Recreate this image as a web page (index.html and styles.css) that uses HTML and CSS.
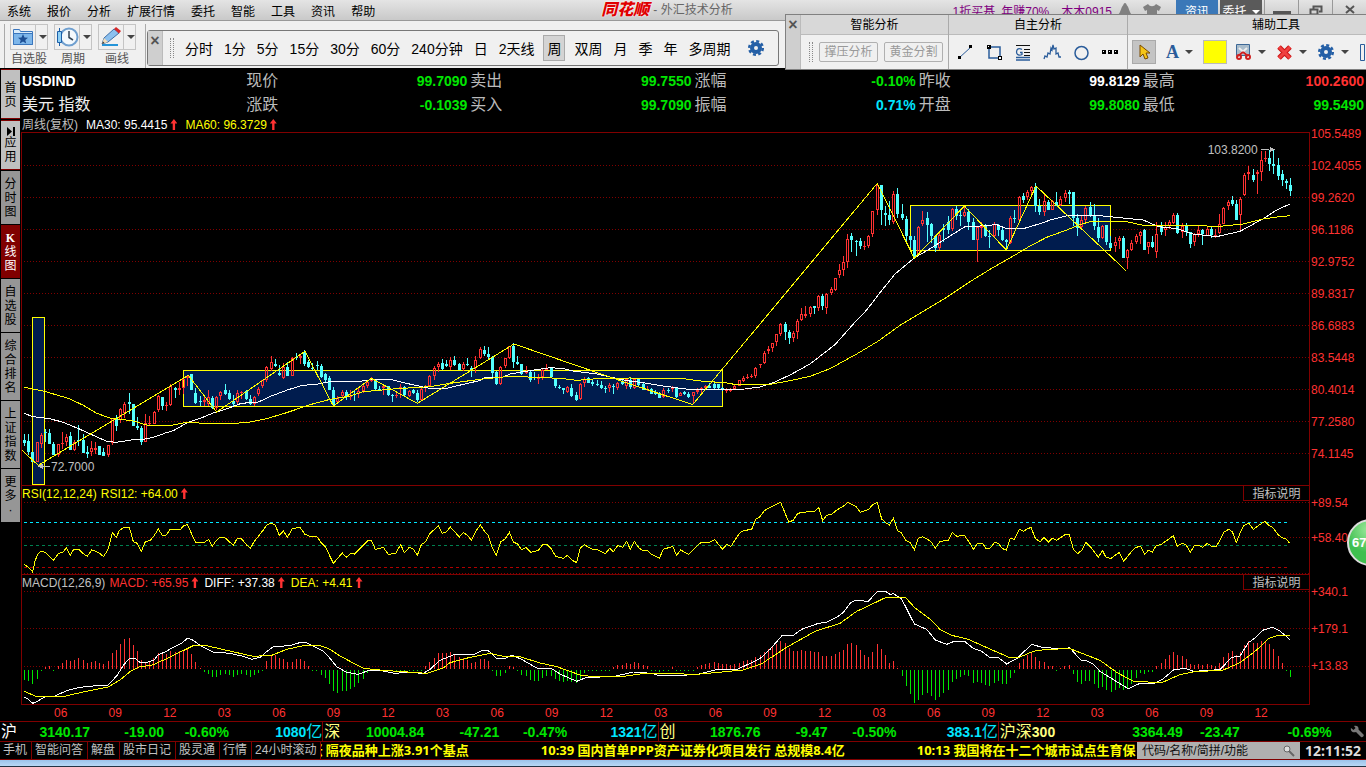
FILE: index.html
```html
<!DOCTYPE html>
<html lang="zh-CN">
<head>
    <meta charset="UTF-8">
    <meta name="viewport" content="width=device-width, initial-scale=1.0">
    <title>同花顺 - 外汇技术分析</title>
    <link rel="stylesheet" href="styles.css">
</head>
<body>
    <header class="titlebar">
        <nav class="menu">
            <button type="button">系统</button>
            <button type="button">报价</button>
            <button type="button">分析</button>
            <button type="button">扩展行情</button>
            <button type="button">委托</button>
            <button type="button">智能</button>
            <button type="button">工具</button>
            <button type="button">资讯</button>
            <button type="button">帮助</button>
        </nav>
        <h1 class="app-title"><span class="logo">同花顺</span> - 外汇技术分析</h1>
        <div class="title-right">
            <a class="promo" href="#">1折买基</a>
            <a class="promo" href="#">年赚70%</a>
            <a class="promo user" href="#">木木0915</a>
            <svg class="bell" width="16" height="16" viewBox="0 0 16 16"><path d="M8 1c1 0 1.500 1 1.700 2C12 5 12 10 15 13H1C4 10 4 5 6.300 3 6.500 2 7 1 8 1z" fill="#808080"/></svg>
            <svg class="shirt" width="20" height="16" viewBox="0 0 20 16"><path d="M6 2c2 3 6 3 8 0l5 3-2 4-2-1v8H5V8L3 9 1 5z" fill="#808080"/></svg>
            <button type="button" class="title-btn news">资讯</button>
            <button type="button" class="title-btn trade">委托<span class="caret light"></span></button>
            <button type="button" class="win-btn" aria-label="最小化"><svg width="18" height="14"><path d="M0 9.500h18" stroke="#555" stroke-width="3"/></svg></button>
            <button type="button" class="win-btn" aria-label="还原"><svg width="14" height="14"><path d="M4.500 6V3.500h8v5H10M1.500 6.500h7v5h-7z" fill="none" stroke="#555" stroke-width="2"/></svg></button>
            <button type="button" class="win-btn" aria-label="关闭"><svg width="12" height="14"><path d="M2 3l8 7M10 3l-8 7" stroke="#555" stroke-width="2"/></svg></button>
        </div>
    </header>

    <div class="toolbar">
        <div class="tool-groups">
            <div class="tool">
                <button type="button" class="split" aria-label="自选股">
                    <svg width="24" height="22" viewBox="0 0 24 22"><path d="M2.500 18.500v-15h6l1 2h12v13z" fill="#d9ecfb" stroke="#3a76bd"/><path d="M2.500 7.500h19v11h-19z" fill="#7db6ea" stroke="#3a76bd"/><path d="M12 8l1.500 3.500 3.500.2-2.700 2.300.9 3.500-3.200-2-3.200 2 .9-3.500L7 11.700l3.500-.2z" fill="#1d4f94"/></svg>
                    <span class="caret"></span>
                </button>
                <span>自选股</span>
            </div>
            <div class="tool">
                <button type="button" class="split" aria-label="周期">
                    <svg width="24" height="22" viewBox="0 0 24 22"><circle cx="14" cy="11" r="8.500" fill="#f4f9fd" stroke="#6f9fcf" stroke-width="2"/><path d="M14 5v6.500l4 2.500" fill="none" stroke="#345" stroke-width="1.500"/><path d="M4.500 2v18" stroke="#1d5fa8"/><path d="M2.500 5.500h4v11h-4z" fill="#8fd0f5" stroke="#1d5fa8"/></svg>
                    <span class="caret"></span>
                </button>
                <span>周期</span>
            </div>
            <div class="tool">
                <button type="button" class="split" aria-label="画线">
                    <svg width="24" height="22" viewBox="0 0 24 22"><path d="M3 19h16" stroke="#2494d8" stroke-width="2"/><path d="M3 18l2-6L15 3l5 4L9 16z" fill="#8cc0ee" stroke="#3f6fa6"/><path d="M15 3l2-2 5 4-2 2.500z" fill="#d62828"/><path d="M3 18l2-6 4 4z" fill="#f3dcb8"/><path d="M3 18l1-2.500L5.500 17z" fill="#333"/></svg>
                    <span class="caret"></span>
                </button>
                <span>画线</span>
            </div>
        </div>
        <div class="periods">
            <button type="button" class="close-strip" aria-label="关闭">×</button>
            <span class="grip"></span>
            <button type="button">分时</button>
            <button type="button">1分</button>
            <button type="button">5分</button>
            <button type="button">15分</button>
            <button type="button">30分</button>
            <button type="button">60分</button>
            <button type="button">240分钟</button>
            <button type="button">日</button>
            <button type="button">2天线</button>
            <button type="button" class="selected">周</button>
            <button type="button">双周</button>
            <button type="button">月</button>
            <button type="button">季</button>
            <button type="button">年</button>
            <button type="button">多周期</button>
            <button type="button" class="gear" aria-label="设置"><svg width="18" height="18" viewBox="0 0 18 18"><circle cx="9" cy="9" r="6.800" fill="none" stroke="#245fa6" stroke-width="2.500" stroke-dasharray="3 2.340"/><circle cx="9" cy="9" r="4" fill="none" stroke="#245fa6" stroke-width="4"/></svg></button>
        </div>
    </div>

    <section class="draw-panel">
        <button type="button" class="close-strip" aria-label="关闭">×</button>
        <div class="draw-group smart">
            <h2>智能分析</h2>
            <div class="draw-row">
                <span class="grip"></span>
                <button type="button" class="outline-btn">撑压分析</button>
                <button type="button" class="outline-btn">黄金分割</button>
            </div>
        </div>
        <div class="draw-group manual">
            <h2>自主分析</h2>
            <div class="draw-row">
                <button type="button" aria-label="线段"><svg width="17" height="17"><path d="M2 14L14 3" stroke="#2a5c9a"/><path d="M1 12h3v3H1zM12 1h3v3h-3z"/></svg></button>
                <button type="button" aria-label="矩形"><svg width="17" height="17"><path d="M3 3h11v11H3z" fill="none" stroke="#2a5c9a" stroke-width="1.500"/><path d="M1 1h4v4H1zM12 12h4v4h-4z"/><path d="M2 2h1v1H2zM13 13h2v2h-2z" fill="#fff"/></svg></button>
                <button type="button" aria-label="黄金线"><svg width="17" height="17"><path d="M1 1.500h14M9 5.500h6M9 8.500h6M9 11.500h6" stroke="#111"/><path d="M1 13.500h14M1 16h14M7 5.500C4 3.500 1.500 5 1.500 8s3 4 5.500 2.500v-2H5" fill="none" stroke="#2a5c9a" stroke-width="1.300"/></svg></button>
                <button type="button" aria-label="波浪线"><svg width="18" height="17"><path d="M1 15l1-3 2 1 1-4 2 1 1-6 1 2 1-5 1 4 2-1 0 6 2-1 1 4 2 0" fill="none" stroke="#2a5c9a" stroke-width="1.300"/></svg></button>
                <button type="button" aria-label="圆"><svg width="17" height="17"><circle cx="8.500" cy="9" r="6.500" fill="none" stroke="#2a5c9a" stroke-width="1.500"/></svg></button>
                <button type="button" aria-label="更多"><svg width="17" height="17"><path d="M0 6h4v4H0zM6 6h4v4H6zM12 6h4v4h-4z"/><path d="M1 7h1v1H1zM7 7h1v1H7zM13 7h1v1h-1z" fill="#fff"/></svg></button>
            </div>
        </div>
        <div class="draw-group aids">
            <h2>辅助工具</h2>
            <div class="draw-row">
                <button type="button" class="pressed" aria-label="选择"><svg width="14" height="18"><path d="M3 2v12l3-3 2 5 3-1-2-5h4z" fill="#f5c518" stroke="#7a4b00"/></svg></button>
                <button type="button" class="letter">A<span class="caret"></span></button>
                <button type="button" class="swatch" aria-label="颜色"></button>
                <button type="button" aria-label="剪裁"><svg width="17" height="18"><path d="M1.500 1.500h13v11h-13z" fill="#a9bccb" stroke="#3d6896"/><path d="M4 5l9 8M12 5l-9 8" stroke="#eee" stroke-width="2"/><path d="M8 9l5 4M8 9l-5 4" stroke="#cf2020" stroke-width="2"/><circle cx="4" cy="14" r="2" fill="none" stroke="#cf2020" stroke-width="2"/><circle cx="13" cy="14" r="2" fill="none" stroke="#cf2020" stroke-width="2"/></svg><span class="caret"></span></button>
                <button type="button" aria-label="删除"><svg width="17" height="17"><path d="M3 3l11 11M14 3L3 14" stroke="#cc1414" stroke-width="5"/><path d="M3 3l11 11M14 3L3 14" stroke="#f04040" stroke-width="3"/></svg><span class="caret"></span></button>
                <button type="button" aria-label="设置"><svg width="18" height="18" viewBox="0 0 18 18"><circle cx="9" cy="9" r="6.800" fill="none" stroke="#245fa6" stroke-width="2.500" stroke-dasharray="3 2.340"/><circle cx="9" cy="9" r="4" fill="none" stroke="#245fa6" stroke-width="4"/></svg><span class="caret"></span></button>
                <button type="button" aria-label="区间"><svg width="17" height="19"><path d="M1.500 1.500h4v16h-4z" fill="none" stroke="#2a5c9a"/><path d="M7 13.500h10M7 17.500h10" stroke="#2a5c9a" stroke-dasharray="2 1"/><path d="M8 1h5l-2 2 5 5-1 1-5-5-2 2z"/></svg></button>
            </div>
        </div>
    </section>

    <main class="workspace">
        <nav class="side-tabs">
            <button type="button" class="light">首页</button>
            <button type="button" class="light"><svg width="9" height="9"><path d="M1 0l5 4.500L1 9zM7 0h2v9H7z"/></svg>应用</button>
            <button type="button">分时图</button>
            <button type="button" class="active"><b>K</b>线图</button>
            <button type="button">自选股</button>
            <button type="button">综合排名</button>
            <button type="button">上证指数</button>
            <button type="button">更多<span>·</span></button>
        </nav>

        <div class="content">
            <dl class="quote">
                <div class="name"><dt>USDIND</dt></div>
                <div><dt>现价</dt><dd class="down">99.7090</dd></div>
                <div><dt>卖出</dt><dd class="down">99.7550</dd></div>
                <div><dt>涨幅</dt><dd class="down">-0.10%</dd></div>
                <div><dt>昨收</dt><dd>99.8129</dd></div>
                <div><dt>最高</dt><dd class="up">100.2600</dd></div>
                <div class="subname"><dt>美元 指数</dt></div>
                <div><dt>涨跌</dt><dd class="down">-0.1039</dd></div>
                <div><dt>买入</dt><dd class="down">99.7090</dd></div>
                <div><dt>振幅</dt><dd class="cyan">0.71%</dd></div>
                <div><dt>开盘</dt><dd class="down">99.8080</dd></div>
                <div><dt>最低</dt><dd class="down">99.5490</dd></div>
            </dl>

            <div class="legend ma-legend">
                <span class="gray">周线(复权)</span>
                <span class="white">MA30: 95.4415<i class="arrow"></i></span>
                <span class="yellow">MA60: 96.3729<i class="arrow"></i></span>
            </div>

            <div class="panel">
                <div class="plot">
                    <svg id="kline" class="kline" viewBox="66 9 3861 1056" preserveAspectRatio="none"></svg>
                </div>
                <ul class="axis price-axis">
                    <li>105.5489</li><li>102.4055</li><li>99.2620</li><li>96.1186</li><li>92.9752</li><li>89.8317</li>
                    <li>86.6883</li><li>83.5448</li><li>80.4014</li><li>77.2580</li><li>74.1145</li>
                </ul>
            </div>

            <div class="panel">
                <div class="plot">
                    <div class="legend">
                        <span class="yellow">RSI(12,12,24)</span>
                        <span class="yellow">RSI12: +64.00<i class="arrow"></i></span>
                        <button type="button" class="explain">指标说明</button>
                    </div>
                    <svg id="rsi" class="rsi" viewBox="66 66 3861 216" preserveAspectRatio="none"></svg>
                </div>
                <ul class="axis rsi-axis"><li>+89.54</li><li>+58.40</li></ul>
            </div>

            <div class="panel">
                <div class="plot last">
                    <div class="legend">
                        <span class="gray">MACD(12,26,9)</span>
                        <span class="red">MACD: +65.95<i class="arrow"></i></span>
                        <span class="white">DIFF: +37.38<i class="arrow"></i></span>
                        <span class="yellow">DEA: +4.41<i class="arrow"></i></span>
                        <button type="button" class="explain">指标说明</button>
                    </div>
                    <svg id="macd" class="macd" viewBox="66 333 3861 339" preserveAspectRatio="none"></svg>
                </div>
                <ul class="axis macd-axis"><li>+340.1</li><li>+179.1</li><li>+13.83</li></ul>
            </div>

            <div class="months">
                <span>06</span><span>09</span><span>12</span><span>03</span><span>06</span><span>09</span><span>12</span><span>03</span>
                <span>06</span><span>09</span><span>12</span><span>03</span><span>06</span><span>09</span><span>12</span><span>03</span>
                <span>06</span><span>09</span><span>12</span><span>03</span><span>06</span><span>09</span><span>12</span>
            </div>
        </div>
    </main>

    <div class="speed-ball">67</div>

    <footer>
        <div class="indices">
            <div class="index sh"><span class="label white">沪</span><b>3140.17</b><b>-19.00</b><b>-0.60%</b><b class="cyan">1080<i>亿</i></b></div>
            <div class="index sz"><span class="label">深</span><b>10004.84</b><b>-47.21</b><b>-0.47%</b><b class="cyan">1321<i>亿</i></b></div>
            <div class="index cy"><span class="label">创</span><b>1876.76</b><b>-9.47</b><b>-0.50%</b><b class="cyan">383.1<i>亿</i></b></div>
            <div class="index hs"><span class="label">沪深<strong>300</strong></span><b>3364.49</b><b>-23.47</b><b>-0.69%</b>
                <svg width="14" height="14" viewBox="0 0 14 14"><path d="M4 1c3-1 5 1 4.500 3.500l5 5c1 1.500-1 3.500-2.500 2.500L6 7C3 8 0 6 1 3l2.500 2 2-2z" fill="#777"/></svg>
            </div>
        </div>
        <div class="news-row">
            <nav class="links">
                <a href="#">手机</a><a href="#">智能问答</a><a href="#">解盘</a><a href="#">股市日记</a><a href="#">股灵通</a><a href="#">行情</a><a href="#">24小时滚动</a>
            </nav>
            <div class="marquee">
                <span>涨 隔夜品种上涨3.91个基点</span>
                <span>10:39 国内首单PPP资产证券化项目发行 总规模8.4亿</span>
                <span>10:13 我国将在十二个城市试点生育保</span>
            </div>
            <div class="search">
                <input type="text" aria-label="搜索" placeholder="代码/名称/简拼/功能">
                <svg width="12" height="12"><circle cx="4" cy="4" r="3" fill="#ddd" stroke="#666"/><path d="M6 6l5 5" stroke="#666" stroke-width="2"/></svg>
            </div>
            <time>12:11:52</time>
        </div>
        <div class="taskbar"></div>
    </footer>
    <script src="script.js"></script>
</body>
</html>
```

FILE: styles.css
```css
* {
    box-sizing: border-box;
}
body {
    margin: 0;
    background: #000;
    color: #000;
    font-family: "Liberation Sans", "Noto Sans CJK SC", sans-serif;
    font-size: 12px;
    overflow: hidden;
}
button {
    margin: 0;
    padding: 0;
    border: none;
    background: none;
    color: inherit;
    font: inherit;
    white-space: nowrap;
    cursor: pointer;
}
svg {
    display: block;
    flex: none;
}
h1, h2, dl, dd, ul {
    margin: 0;
    padding: 0;
    font-weight: normal;
    list-style: none;
}
i {
    font-style: normal;
}
a {
    color: inherit;
    text-decoration: none;
}
.caret {
    display: inline-block;
    border: 4px solid transparent;
    border-top-color: #444;
    border-bottom: none;
}
.caret.light {
    margin-left: 5px;
    border-top-color: #fff;
    vertical-align: middle;
}

/* title bar */
.titlebar {
    display: flex;
    align-items: center;
    height: 20px;
    padding-left: 7px;
    background: linear-gradient(#e4e4e4, #c9c9c9);
}
.menu {
    display: flex;
    flex: 595;
    gap: 16px;
}
.app-title {
    display: flex;
    align-items: center;
    gap: 4px;
    font-size: 12px;
    line-height: 20px;
    color: #666;
    white-space: nowrap;
}
.logo {
    color: #e00000;
    font-size: 16px;
    font-weight: 900;
    font-style: italic;
    text-shadow: 0 0 2px #fff, 0 0 1px #fff;
}
.title-right {
    display: flex;
    flex: 634;
    justify-content: flex-end;
    align-items: center;
    height: 20px;
    overflow: hidden;
}
.promo {
    margin-right: 6px;
    color: #800080;
}
.promo.user {
    margin: 0 5px 0 6px;
}
.shirt {
    margin: 0 14px 0 9px;
}
.title-btn {
    width: 42px;
    height: 20px;
    margin-right: 2px;
    color: #fff;
    background: #3b78b8;
}
.title-btn.trade {
    background: #5a5a5a;
}
.win-btn {
    display: flex;
    align-items: center;
    justify-content: center;
    width: 34px;
    height: 20px;
    border-left: 1px solid #999;
}

/* toolbar */
.toolbar {
    display: flex;
    height: 48px;
    border-top: 1px solid #999;
    background: #f0f0f0;
}
.tool-groups {
    display: flex;
    gap: 6px;
    width: 142px;
    margin: 3px 0 0 4px;
    padding-left: 5px;
    border-left: 1px solid #aaa;
    border-right: 1px solid #aaa;
}
.tool {
    display: flex;
    flex-direction: column;
    align-items: center;
    color: #555;
    line-height: 18px;
}
.split {
    display: flex;
    align-items: center;
    gap: 4px;
    width: 38px;
    height: 26px;
    border: 1px solid #c4c4c4;
    background: linear-gradient(90deg, transparent 24px, #c4c4c4 24px, #c4c4c4 25px, transparent 25px);
}
.periods {
    display: flex;
    align-items: center;
    gap: 11px;
    width: 632px;
    height: 36px;
    margin: 9px 0 0 1px;
    border: 1px solid #777;
    border-radius: 3px;
    font-size: 14px;
}
.close-strip {
    display: flex;
    flex: none;
    justify-content: center;
    align-self: stretch;
    width: 15px;
    padding-top: 2px;
    border-right: 1px solid #bbb;
    background: #cfcfcf;
    color: #555;
    font-size: 16px;
    font-weight: bold;
    line-height: 16px;
}
.grip {
    width: 4px;
    height: 20px;
    border-left: 1px dotted #888;
    border-right: 1px dotted #888;
}
.periods .close-strip {
    margin-right: -4px;
}
.periods .selected {
    width: 22px;
    height: 26px;
    margin: 0 -2px;
    border: 1px solid #aaa;
    background: #d4d4d4;
}
.periods .gear {
    margin-left: 6px;
}

/* floating drawing tools */
.draw-panel {
    position: absolute;
    top: 14px;
    left: 785px;
    right: 0;
    display: flex;
    height: 56px;
    border: 1px solid #808080;
    border-right: none;
    background: #f0f0f0;
    overflow: hidden;
}
.draw-group {
    border-right: 1px solid #aaa;
}
.draw-group h2 {
    height: 20px;
    border-bottom: 1px solid #bbb;
    background: #d8d8d8;
    font-size: 12px;
    line-height: 20px;
    text-align: center;
}
.draw-row {
    display: flex;
    align-items: center;
    height: 34px;
    padding: 0 5px 0 8px;
}
.smart {
    flex: none;
    width: 148px;
}
.smart .draw-row {
    justify-content: space-between;
}
.outline-btn {
    width: 59px;
    height: 20px;
    border: 1px solid #b0b0b0;
    border-radius: 2px;
    color: #999;
    line-height: 18px;
}
.manual {
    flex: none;
    width: 179px;
}
.manual .draw-row {
    justify-content: space-between;
    padding: 0 8px;
}
.aids {
    flex: 1;
    min-width: 0;
    border-right: none;
}
.aids h2 {
    padding-left: 58px;
}
.aids .draw-row {
    gap: 10px;
    padding: 0 0 0 4px;
}
.aids button {
    display: flex;
    flex: none;
    align-items: center;
    gap: 6px;
}
.aids .pressed {
    justify-content: center;
    width: 24px;
    height: 24px;
    border: 1px solid #aaa;
    background: #c4c4c4;
}
.aids .letter {
    color: #2a5c9a;
    font: bold 18px "Liberation Serif", serif;
}
.aids .swatch {
    width: 24px;
    height: 24px;
    margin-right: -2px;
    border: 1px solid #bbb;
    background: #ff0;
}

/* workspace */
.workspace {
    display: flex;
}
.side-tabs {
    display: flex;
    flex-direction: column;
    gap: 1px;
    width: 21px;
    padding: 1px 1px 0;
}
.side-tabs button {
    display: flex;
    flex-direction: column;
    align-items: center;
    justify-content: center;
    width: 19px;
    padding: 6px 3px 5px;
    background: #969696;
    font-size: 12px;
    line-height: 14px;
    white-space: normal;
    word-break: break-all;
}
.side-tabs .light {
    height: 50px;
    border: solid #800000;
    border-width: 1px 0;
    background: #c0c0c0;
}
.side-tabs .active {
    background: #800000;
    color: #fff;
}
.side-tabs b {
    font-family: "Liberation Serif", serif;
}
.content {
    flex: 1;
    min-width: 0;
}
.quote {
    display: grid;
    grid-template-columns: repeat(6, 1fr);
    height: 49px;
    padding-top: 1px;
    line-height: 24px;
}
.quote div {
    display: flex;
    justify-content: space-between;
    padding: 0 2px 0 1px;
}
.quote dt {
    color: #bbb;
    font-size: 16px;
}
.quote dd {
    color: #fff;
    font-size: 14px;
    font-weight: bold;
}
.quote .name dt {
    color: #fff;
    font-size: 14px;
    font-weight: bold;
}
.quote .subname dt {
    color: #eee;
}
.quote .up {
    color: #ff3232;
}
.quote .down {
    color: #00e600;
}
.quote .cyan {
    color: #00e6ff;
}

/* charts */
.legend {
    display: flex;
    gap: 4px;
    height: 16px;
    line-height: 16px;
    white-space: nowrap;
}
.ma-legend {
    gap: 8px;
    height: 15px;
    padding-left: 1px;
}
.arrow {
    display: inline-block;
    width: 7px;
    height: 11px;
    margin: 0 2px -1px 3px;
    background: #ff3232;
    clip-path: polygon(50% 0, 100% 40%, 67% 40%, 67% 100%, 33% 100%, 33% 40%, 0 40%);
}
.ma-legend .arrow {
    margin-right: 0;
}
.gray {
    color: #c0c0c0;
}
.white {
    color: #fff;
}
.yellow {
    color: #ff0;
}
.red {
    color: #ff3232;
}
.panel {
    display: flex;
}
.plot {
    flex: 1;
    min-width: 0;
    border: 1px solid #800000;
    border-bottom: none;
}
.plot.last {
    border-bottom: 1px solid #800000;
}
.plot svg {
    width: 100%;
    shape-rendering: crispEdges;
}
.kline {
    height: 352px;
}
.rsi {
    height: 72px;
}
.macd {
    height: 113px;
}
.explain {
    width: 66px;
    height: 15px;
    margin-left: auto;
    border: solid #800000;
    border-width: 0 0 1px 1px;
    color: #c0c0c0;
    line-height: 16px;
}
.axis {
    width: 56px;
    padding-left: 1px;
    color: #ff3232;
    line-height: 16px;
}
.price-axis {
    margin-top: -14px;
    line-height: 32px;
}
.rsi-axis {
    display: grid;
    align-content: start;
    gap: 19px;
    padding-top: 10px;
}
.macd-axis {
    display: grid;
    align-content: start;
    gap: 21px;
    padding-top: 10px;
}
.months {
    display: flex;
    justify-content: space-between;
    height: 16px;
    padding: 0 98px 0 33px;
    color: #ff3232;
    line-height: 17px;
}
.grid-dots {
    stroke: #800000;
    stroke-width: 3;
    stroke-dasharray: 3 6;
}
.line {
    fill: none;
    stroke-width: 3;
}
.zone {
    fill: #001c4e;
    stroke: #ff0;
    stroke-width: 3;
}
.mark {
    fill: #c0c0c0;
    font-size: 36px;
}

/* speed ball on the right edge */
.speed-ball {
    position: absolute;
    top: 519px;
    right: -28px;
    width: 47px;
    height: 47px;
    padding-left: 3px;
    border: 2px solid #ddd;
    border-radius: 50%;
    background: radial-gradient(circle at 45% 20%, #9be89b, #3fbf4f 55%);
    color: #fff;
    font-size: 13px;
    font-weight: bold;
    line-height: 43px;
}

/* footer */
.indices {
    display: flex;
    height: 20px;
    border-top: 1px solid #800000;
    line-height: 20px;
}
.index {
    display: grid;
    align-items: center;
    border-right: 1px solid #800000;
    color: #00e600;
    font-size: 14px;
    text-align: right;
}
.index .label {
    grid-area: 1 / 1;
    padding-left: 1px;
    color: #ffff80;
    font-size: 16px;
    text-align: left;
}
.index .label.white {
    color: #fff;
}
.index strong {
    font-size: 14px;
}
.index b:first-of-type {
    grid-area: 1 / 1;
}
.index i {
    font-size: 16px;
    font-weight: normal;
}
.index .cyan {
    color: #00e6ff;
}
.sh {
    flex: 323;
    grid-template-columns: 90px 74px 65px 1fr;
}
.sz {
    flex: 335;
    grid-template-columns: 101px 75px 68px 1fr;
}
.cy {
    flex: 340;
    grid-template-columns: 102px 67px 69px 1fr;
}
.hs {
    flex: 368;
    grid-template-columns: 184px 57px 92px 1fr;
    border-right: none;
}
.hs svg {
    margin-left: 18px;
}
.news-row {
    display: flex;
    height: 19px;
    border: solid #800000;
    border-width: 1px 0;
    line-height: 17px;
}
.links {
    display: flex;
    color: #c0c0c0;
    white-space: nowrap;
}
.links a {
    padding: 0 4px 0 3px;
    border-right: 1px solid #800000;
}
.marquee {
    display: flex;
    flex: 1;
    gap: 72px;
    min-width: 0;
    overflow: hidden;
    color: #ff0;
    font-family: "Noto Sans", "Noto Sans CJK SC", sans-serif;
    font-size: 13px;
    font-weight: bold;
    white-space: nowrap;
}
/* the first headline is already scrolling out */
.marquee span:first-child {
    margin-left: -12px;
}
.search {
    display: flex;
    align-items: center;
    width: 163px;
    padding: 0 5px;
    background: #b0b0b0;
}
.search input {
    flex: 1;
    min-width: 0;
    height: 17px;
    padding: 1px 0 0;
    border: none;
    outline: none;
    background: none;
    font: inherit;
}
.search input::placeholder {
    color: #111;
}
time {
    width: 66px;
    color: #ddd;
    font-family: "Noto Sans", sans-serif;
    font-size: 14px;
    font-weight: bold;
    text-align: center;
}
.taskbar {
    height: 7px;
    border-bottom: 1px solid #234;
    background: linear-gradient(#9cc3ea, #b9d8f5);
}
```

FILE: script.js
```js
// chart units: 3 units = 1px
// candle: x high bodyTop bodyBottom low, r = up, c = down
const candles = [
    { dx: 0, dy: 0, rows: `73 913 930 941 950 c,85 912 934 966 975 c,98 966 966 998 998 c,112 938 938 998 998 r,124 910 916 942 955 r,137 897 906 910 938 c,148 897 910 944 944 c,161 936 942 975 975 c,175 942 942 975 983 r,187 906 940 942 958 r,199 912 921 936 948 r,211 906 918 960 962 c,223 930 938 960 965 r,236 885 930 934 950 c,250 912 930 970 970 c,262 950 966 972 986 c,275 934 954 968 980 r,287 936 954 961 972 r,299 948 950 977 977 c,310 955 966 979 980 c,325 945 946 975 983 r,337 864 866 940 945 r,349 855 868 888 905 c,361 834 838 870 880 r,373 818 822 849 864 r,388 789 818 822 852 c,400 822 824 888 888 c,412 861 888 894 900 c,424 888 894 936 945 c,436 852 880 936 936 r,448 858 880 884 888 r,463 843 846 884 884 r,475 795 798 842 846 r,487 801 801 828 840 c,499 816 826 830 843 r,511 762 768 825 828 r,526 771 776 780 806 c,538 757 776 780 795 r,550 744 748 775 792 r,562 735 740 745 768 r,575 733 733 780 780 c,587 775 790 820 822 c,601 800 814 818 830 c,613 800 812 816 828 r,625 780 802 824 830 r,637 800 804 836 838 c,649 800 802 834 840 r,661 783 788 800 812 r,676 762 782 792 795 c,688 780 790 808 810 c,700 795 814 824 828 c,712 780 790 818 824 r,724 785 788 791 808 r,739 780 784 808 812 c,751 795 808 824 826 c,763 798 801 822 828 r,775 772 778 794 798 r,787 750 752 770 774 r,799 710 713 752 756 r,814 678 697 718 725 r,826 688 704 708 712 c,838 706 730 736 740 c,850 700 712 745 748 r,862 696 712 738 740 c,877 682 684 738 738 r,889 670 682 686 692 c,901 672 678 684 702 r,913 660 668 704 708 c,925 690 696 712 714 c,937 700 714 718 720 c,952 695 706 710 720 c,964 704 710 742 744 c,977 730 734 752 756 c,988 740 745 780 780 c` },
    { dx: 990, dy: 570, rows: `10 202 210 255 260 c,22 230 236 248 250 r,37 212 218 230 236 r,49 212 216 232 240 c,61 210 228 232 240 r,73 212 222 226 245 c,85 205 214 222 234 r,100 190 198 214 220 r,112 180 186 200 205 r,124 172 180 182 188 r,137 180 182 208 210 c,148 198 208 210 212 c,160 196 200 206 226 r,175 198 198 226 228 c,187 222 226 228 246 c,199 216 226 228 234 r,211 192 202 208 234 r,223 200 202 226 228 c,238 210 214 230 232 r,250 208 212 220 222 c,262 212 220 240 248 c,275 204 208 240 242 r,286 195 202 206 218 r,298 165 170 200 200 r,313 140 145 168 182 r,325 128 134 142 156 r,337 118 130 148 150 c,349 122 132 138 142 c,361 112 122 142 150 r,373 110 122 136 138 c,388 130 134 150 150 c,400 128 132 148 154 r,412 116 132 136 140 c,424 138 146 152 172 c,436 110 122 146 160 r,451 82 88 116 118 r,463 78 90 102 110 c,475 82 104 112 120 c,487 110 112 160 178 c,499 154 158 194 196 c,511 138 142 194 196 r,526 114 116 138 144 r,538 80 80 116 118 r,550 70 78 126 146 c,562 108 126 134 136 c,575 134 134 162 166 c,589 140 156 160 164 r,601 152 156 180 188 c,613 156 172 176 182 c,625 162 172 178 192 r,637 148 152 172 182 r,649 132 146 150 152 r,664 142 146 172 174 c,676 178 178 200 206 c,688 196 202 206 208 c,700 206 206 210 224 c,712 198 202 218 220 r,724 192 204 228 232 c,739 216 226 240 244 c,751 190 192 238 240 r,763 172 178 190 202 r,775 172 174 190 190 c,787 180 188 194 198 c,802 182 192 196 200 c,814 184 196 206 208 c,826 200 206 208 220 c,838 190 196 206 216 r,850 194 198 202 224 c,862 186 190 206 210 r,877 178 188 194 196 c,889 178 178 200 208 r,901 172 180 202 208 c,913 176 178 204 208 r,925 176 176 196 198 c,940 190 192 212 212 c,952 200 208 212 214 r,964 206 208 222 222 c,976 210 218 224 226 c,988 216 224 236 236 c,1000 206 210 232 236 r,1015 206 210 214 220 c,1027 198 204 208 216 r,1039 202 202 232 234 c,1051 218 220 228 230 r,1063 214 218 222 226 c,1075 216 222 232 234 c,1090 216 218 230 250 r,1102 204 212 216 222 r,1114 202 206 212 222 r,1126 196 200 206 208 r,1138 190 200 204 206 c,1153 184 194 206 208 c,1165 192 194 204 208 c,1177 202 204 210 214 c,1189 206 210 214 220 r,1201 206 210 212 216 r,1213 194 198 208 210 r,1228 182 182 198 200 r,1240 168 174 184 186 r,1252 162 172 174 178 r` },
    { dx: 2160, dy: 0, rows: `94 732 740 742 744 r,106 711 714 740 744 r,121 702 702 704 714 r,133 663 670 700 702 r,145 648 657 665 672 r,157 640 640 656 666 r,169 612 614 638 650 r,181 580 582 612 618 r,196 578 582 606 632 c,208 600 606 626 644 c,220 604 610 624 638 r,232 567 573 608 628 r,244 534 552 570 575 r,256 530 554 558 564 r,271 528 531 554 562 r,283 528 528 534 554 c,295 495 498 534 545 r,307 492 498 530 542 c,319 490 492 534 552 r,334 473 478 490 496 r,346 444 445 480 485 r,358 402 420 436 444 r,370 378 396 422 440 r,382 312 328 396 414 r,394 310 318 330 366 c,409 330 334 338 380 c,421 324 334 350 358 c,433 334 350 352 362 r,445 315 318 348 354 r,457 243 244 314 322 r,472 160 166 242 256 r,484 165 165 240 286 c,496 228 249 255 290 c,508 213 255 270 285 c,520 183 192 276 284 r,532 174 192 252 264 c,547 222 252 266 272 c,559 258 267 318 344 c,571 318 318 332 356 c,583 320 332 378 385 c,595 288 291 372 380 r,607 243 270 284 290 r,622 246 264 285 336 c,634 280 282 320 340 c,646 318 320 354 368 c,658 304 316 356 360 r,670 282 296 300 336 c,685 258 276 300 312 c,697 234 237 298 304 r,709 230 237 258 270 c,721 240 257 260 288 c,733 228 246 258 262 r,745 238 246 278 300 c,760 265 276 332 332 c,772 290 292 330 398 r,784 276 290 296 324 r,796 282 290 320 322 c,808 300 320 323 356 c,823 276 284 318 324 r,835 282 290 300 320 c,847 292 300 330 334 c,859 327 332 336 356 c,871 260 264 340 342 r,883 240 264 268 280 c,898 200 202 272 276 r,910 190 198 210 220 c,922 180 186 202 210 r,934 168 171 183 195 r,946 160 171 228 248 c,958 208 228 246 256 c,973 195 214 246 260 r,985 210 216 240 240 c` },
    { dx: 3090, dy: 0, rows: `67 210 215 240 242 r,79 186 216 228 230 c,91 198 208 226 228 r,106 180 190 206 216 r,118 180 188 192 222 c,130 186 186 266 290 c,142 252 264 296 320 c,154 260 272 292 298 r,166 228 234 270 278 r,181 216 231 258 262 c,193 222 256 290 300 c,205 264 291 324 338 c,217 285 288 324 328 r,229 285 285 338 345 c,241 320 340 354 356 c,256 322 336 350 368 r,268 320 324 334 358 r,280 320 326 385 386 c,292 357 362 386 418 r,304 332 340 360 364 r,319 312 318 338 342 r,331 304 308 318 342 r,343 298 302 360 362 c,355 336 338 352 374 r,367 318 336 352 354 c,379 276 312 368 386 r,394 276 288 308 315 c,406 276 292 302 318 r,418 272 276 290 298 r,430 250 255 280 284 r,442 250 255 310 314 c,457 279 290 306 326 r,469 280 288 306 318 c,481 306 306 342 354 c,493 310 314 336 350 r,505 285 300 314 322 r,517 297 300 314 345 c,532 290 298 318 320 r,544 288 298 316 326 c,556 298 316 318 324 r,568 252 282 310 312 r,580 231 234 282 284 r,595 210 216 230 240 r,607 200 212 224 230 c,619 212 224 270 270 c,631 202 208 256 300 r,643 130 136 196 198 r,655 110 128 132 152 r,670 118 136 152 156 c,682 120 126 132 192 r,694 64 90 126 154 r,706 64 84 87 98 r,718 62 84 104 124 c,730 58 104 108 134 c,745 84 106 138 152 c,757 120 134 150 168 c,769 148 154 160 178 c,781 144 166 184 198 c` }
];

// [dx, dy, 'x,y x,y ...']
const ma30 = [
    [0, 0, '73,850 98,860 148,866 187,876 236,896 275,914 320,934 349,937 400,929 436,927 463,921 499,908 520,902 562,878 601,865 637,850 676,838 724,820 775,816 814,798 862,780 908,766 950,763 990,755'],
    [990, 570, '90,184 130,178 180,178 220,188 298,205 350,205 400,193 448,182 463,174 520,171 540,162 580,155 625,148 660,143 700,146 730,153 800,162 890,182 940,188 1000,198 1075,208 1120,208 1170,208'],
    [2160, 0, '75,777 120,771 160,758 210,735 270,702 345,644 400,582 440,540 480,488 525,432 583,384 640,350 690,318 735,290 780,288 830,284 860,296 910,296 970,278'],
    [3090, 0, '60,270 115,256 220,258 340,270 385,290 440,296 490,312 560,320 630,304 700,266 740,240 780,222']
];
const ma60 = [
    [0, 0, '73,772 130,783 208,806 250,826 290,850 330,864 400,873 450,888 510,887 560,877 650,882 740,878 800,866 860,848 930,824 990,808'],
    [990, 570, '60,228 100,215 200,206 300,200 360,190 450,178 540,169 620,172 690,175 740,181 800,176 900,174 1060,176 1120,184 1170,187'],
    [2160, 0, '30,760 45,764 150,763 210,752 270,739 330,716 410,672 475,633 540,586 620,538 680,502 750,455 820,412 880,378 930,348'],
    [3090, 0, '50,322 110,300 150,284 180,275 290,275 340,286 500,286 560,290 640,282 700,267 740,261 780,257']
];
const trend = [[0, 0, '66,961 115,1006 565,736 650,846 915,664 1000,828 1114,745 1252,820 1542,642 1870,755 2078,824 2632,160 2743,385 2893,228 3019,360 3108,168 3378,422']];
const zones = [[97, 562, 134, 1063], [550, 721, 2167, 829], [2731, 227, 3331, 361]];

const rsi12 = [
    [0, 0, '73,253 85,262 98,276 106,240 114,222 124,213 137,218 160,241 175,221 190,216 199,202 211,226 221,208 236,208 250,221 262,229 275,210 287,214 299,220 311,230 325,206 337,157 349,172 358,152 370,143 388,142 400,185 412,190 424,214 436,185 450,182 463,166 475,147 487,166 499,165 511,147 540,150 550,138 562,133 587,188 613,187 626,178 637,199 649,181 660,172 676,174 700,196 712,175 724,176 740,195 751,205 763,184 790,150 800,135 814,129 826,136 838,166 850,153 862,172 877,146 900,142 915,163 930,169 950,169 965,190 977,202 1000,250 1027,219 1039,232 1052,220 1063,222 1090,195 1102,183 1114,181 1126,208 1150,202 1165,223 1187,220 1202,194 1213,218 1228,202 1240,208 1252,226 1264,194 1276,186 1290,160 1315,138 1327,160 1340,155'],
    [1350, 0, '1,141 15,156 28,171 40,157 52,166 64,180 76,156 91,135 103,153 115,167 127,204 139,226 152,186 165,177 178,157 190,186 203,192 214,209 228,203 242,217 265,211 278,194 290,193 305,208 317,229 340,235 352,226 365,240 380,248 391,204 403,194 425,207 445,210 466,221 479,205 490,215 503,197 518,202 530,184 541,208 553,184 567,204 580,213 592,212 605,223 628,235 640,208 668,199 680,226 692,210 716,223 752,188 780,186 794,179 818,208 830,193 843,199 868,160 880,152 905,148 917,118 930,110 943,92 970,77 992,67 1016,126 1030,121 1043,100 1060,97 1095,93 1106,82 1118,122 1130,106 1145,103 1160,90 1180,79 1193,67 1218,79 1231,97 1256,88 1268,74 1282,67 1295,117 1308,129 1318,135 1330,115 1343,152'],
    [2700, 0, '3,157 18,182 30,187 43,209 55,175 68,170 80,176 93,185 106,205 120,184 145,181 157,157 170,169 193,166 210,190 220,208 233,190 248,190 258,205 270,205 284,187 295,190 306,205 319,211 331,175 343,178 358,148 370,154 380,148 393,142 406,175 420,186 432,172 445,186 457,175 470,181 483,172 497,163 508,163 520,208 533,221 545,211 557,187 570,199 583,216 595,232 607,211 618,232 633,235 658,217 671,244 695,214 708,202 722,199 734,223 745,211 757,216 768,198 784,193 805,178 820,167 832,199 845,190 858,194 871,217 883,197 895,196 908,202 922,190 935,199 949,199 960,181 971,157 986,148 997,155 1009,187 1021,157 1032,136 1046,129 1060,148 1075,137 1094,124 1106,136 1118,142 1135,165 1150,175 1160,178 1169,190']
];

const diff = [
    [0, 0, '73,652 85,658 98,670 112,664 135,650 160,650 200,632 240,622 300,616 322,617 350,588 370,556 388,535 405,535 420,547 445,546 462,540 475,524 495,516 520,502 545,490 562,475 575,478 600,496 640,516 690,520 725,528 755,538 780,532 800,515 820,500 870,497 905,486 920,488 940,498 970,514 990,535 1010,560 1040,577 1075,583 1110,570 1150,573 1185,580 1220,577 1270,580 1290,568 1320,541'],
    [1350, 0, '15,523 70,525 95,512 115,512 140,536 165,535 185,525 215,538 262,565 305,566 330,582 380,604 410,592 490,590 550,576 605,580 630,588 740,584 800,569 860,569 930,536 960,508 995,468 1030,466 1055,448 1105,430 1130,427 1160,412 1180,397 1200,370 1215,361 1255,364 1282,334 1307,334 1320,343 1330,341'],
    [2700, 0, '5,357 43,432 80,448 106,480 140,493 160,485 195,485 220,505 245,514 268,531 295,533 320,552 350,536 395,493 430,503 500,506 508,502 545,543 560,542 580,552 600,574 655,608 685,626 720,610 760,612 790,596 820,570 855,565 880,574 960,569 995,532 1020,528 1045,488 1065,474 1090,450 1118,442 1140,453 1169,478']
];
const dea = [
    [0, 0, '73,634 110,650 190,650 240,638 325,621 360,600 390,575 420,560 455,556 500,536 580,497 615,496 680,511 760,529 815,526 860,508 915,496 955,496 985,505 1020,528 1090,565 1150,571 1280,580 1330,564'],
    [1350, 0, '0,548 60,532 120,520 160,529 210,530 270,549 320,560 390,585 430,590 520,589 590,579 740,583 880,570 935,551 1010,502 1095,454 1170,430 1220,394 1265,373 1310,351'],
    [2700, 0, '0,351 18,354 45,384 90,417 120,448 155,466 205,478 270,507 325,531 360,531 400,514 440,508 510,506 600,541 650,577 700,604 785,608 840,584 880,576 970,570 1020,548 1070,510 1105,476 1135,466 1169,468']
];
// histogram: x and the far end of the bar
const bars = [
    [0, '73 600,86 602,98 611,112 597,124 574,137 561,148 558,160 573,175 558,187 549,199 540,211 543,223 540,235 534,250 540,262 549,274 546,286 543,298 549,310 552,325 543,337 519,349 510,361 492,373 477,388 474,400 495,412 513,424 540,436 546,448 546,460 534,475 519,487 519,499 522,511 513,526 516,538 513,550 510,562 504,575 522,587 546,600 564,613 576,625 582,637 590,649 590,661 585,676 582,688 585,700 590,712 585,724 582,739 585,751 590,763 585,775 579,787 573,799 543,814 528,826 525,838 534,850 537,862 546,877 546,889 537,901 537,913 543,925 558,937 573,950 573,964 585,976 594,988 612,1000 632,1012 639,1027 632,1039 633,1051 626,1063 621,1075 609,1090 597,1102 580,1114 573,1126 573,1138 573,1150 573,1165 573,1177 573,1189 573,1201 573,1213 573,1228 573,1240 573,1252 573,1264 573,1276 558,1288 546,1303 534,1315 519,1327 519,1339 519'],
    [1350, '1 516,13 525,28 531,40 534,52 540,64 549,76 546,91 537,103 537,115 543,127 573,139 588,151 588,166 579,178 558,190 560,202 573,214 585,228 588,241 600,253 603,265 603,277 594,289 588,304 588,316 597,328 603,340 606,352 603,364 606,379 610,391 597,403 579,415 573,427 573,439 573,454 573,466 573,478 573,490 562,502 555,517 555,529 549,541 552,553 546,565 549,580 555,592 558,604 573,616 574,628 576,640 573,655 573,667 562,680 573,692 573,704 573,716 573,730 573,742 561,754 555,766 552,778 549,793 546,805 549,817 552,829 552,841 555,853 552,868 549,880 543,892 540,904 540,916 531,931 525,943 516,955 507,967 498,979 492,991 483,1006 489,1018 504,1030 513,1042 513,1054 510,1066 513,1081 513,1093 516,1105 516,1117 528,1129 528,1144 528,1156 522,1168 516,1180 510,1192 492,1204 489,1219 495,1231 510,1243 525,1255 531,1267 516,1282 492,1294 507,1306 525,1318 549,1330 543,1342 564'],
    [2700, '7 588,19 618,31 642,43 669,55 660,67 645,82 639,94 648,106 660,118 651,130 639,145 630,157 606,169 597,181 591,193 585,205 588,220 609,232 606,244 609,256 615,268 618,283 609,295 603,307 611,319 611,331 594,343 579,358 549,370 537,382 525,394 516,406 531,418 543,433 546,445 558,457 558,469 573,481 564,493 558,508 555,520 582,532 606,544 612,556 603,568 603,583 612,595 624,607 621,619 630,634 636,646 630,658 624,670 630,682 624,694 612,709 594,721 578,733 582,745 576,757 576,769 558,784 549,796 537,808 525,820 516,832 525,847 528,859 537,871 552,883 555,895 552,907 555,921 552,934 555,946 558,958 549,970 531,985 519,997 513,1009 525,1021 516,1033 495,1045 483,1060 489,1072 489,1084 483,1096 483,1108 492,1120 507,1135 528,1147 549,1159 573,1171 591']
];

// snap to the left/top edge of a pixel
function snap(v) {
    return Math.floor(v / 3) * 3;
}

function hLine(y, x2 = 3927) {
    const c = snap(y) + 1.5;
    return `<line class="grid-dots" x1="72" x2="${x2}" y1="${c}" y2="${c}"/>`;
}

function dashed(y, color) {
    const c = snap(y) + 1.5;
    return `<line x1="72" x2="3864" y1="${c}" y2="${c}" stroke="${color}" stroke-width="3" stroke-dasharray="9 9"/>`;
}

function curve(parts, color) {
    const pts = parts.map(([dx, dy, text]) => text.split(' ').map((p) => {
        const [x, y] = p.split(',').map(Number);
        return (x + dx) + ',' + (y + dy);
    }).join(' ')).join(' ');
    return `<polyline class="line" stroke="${color}" points="${pts}"/>`;
}

function drawCandles() {
    let out = '';
    candles.forEach(({ dx, dy, rows }) => {
        rows.split(',').forEach((row) => {
            const p = row.split(' ');
            const x = snap(+p[0] + dx);
            const [h, t, b, l] = p.slice(1, 5).map((v) => snap(+v + dy));
            const color = p[5] === 'r' ? '#ff3232' : '#54ffff';
            const height = Math.max(3, b - t);
            if (p[5] === 'r' && height > 6) {
                out += `<path d="M${x + 1.5} ${h}V${t}M${x + 1.5} ${b}V${l}" stroke="${color}" stroke-width="3"/>`;
                out += `<rect x="${x - 1.5}" y="${t + 1.5}" width="6" height="${height - 3}" fill="none" stroke="${color}" stroke-width="3"/>`;
            } else {
                out += `<path d="M${x + 1.5} ${h}V${l}" stroke="${color}" stroke-width="3"/>`;
                out += `<rect x="${x - 3}" y="${t}" width="9" height="${height}" fill="${color}"/>`;
            }
        });
    });
    return out;
}

function drawKline() {
    let out = '';
    for (let y = 106; y < 1000; y += 96) out += hLine(y);
    zones.forEach(([x1, y1, x2, y2]) => {
        out += `<rect class="zone" x="${snap(x1) + 1.5}" y="${snap(y1) + 1.5}" width="${snap(x2) - snap(x1)}" height="${snap(y2) - snap(y1)}"/>`;
    });
    out += drawCandles() + curve(ma30, '#fff') + curve(ma60, '#ff0') + curve(trend, '#ff0');
    out += '<path d="M115 1009l12-6v12zM120 1009h30M3784 58h24M3822 58l-12-6v12z" fill="#c0c0c0" stroke="#c0c0c0" stroke-width="3"/>';
    out += '<text class="mark" x="153" y="1022">72.7000</text><text class="mark" x="3623" y="72">103.8200</text>';
    document.getElementById('kline').innerHTML = out;
}

function drawRsi() {
    document.getElementById('rsi').innerHTML =
        hLine(67) + hLine(172) + hLine(280) +
        dashed(127, '#00e6ff') + dashed(196, '#008050') + dashed(262, '#b00000') +
        curve(rsi12, '#ff0');
}

function drawMacd() {
    let out = hLine(334) + hLine(445) + hLine(559);
    bars.forEach(([dx, text]) => {
        text.split(',').forEach((bar) => {
            const [x, y] = bar.split(' ').map(Number);
            const px = snap(x + dx) + 1.5;
            const up = y < 568;
            out += `<path d="M${px} ${up ? 567 : 570}V${up ? y : Math.max(y, 573)}" stroke="${up ? '#ff3232' : '#00e600'}" stroke-width="3"/>`;
        });
    });
    out += curve(diff, '#fff') + curve(dea, '#ff0');
    document.getElementById('macd').innerHTML = out;
}

drawKline();
drawRsi();
drawMacd();
```
